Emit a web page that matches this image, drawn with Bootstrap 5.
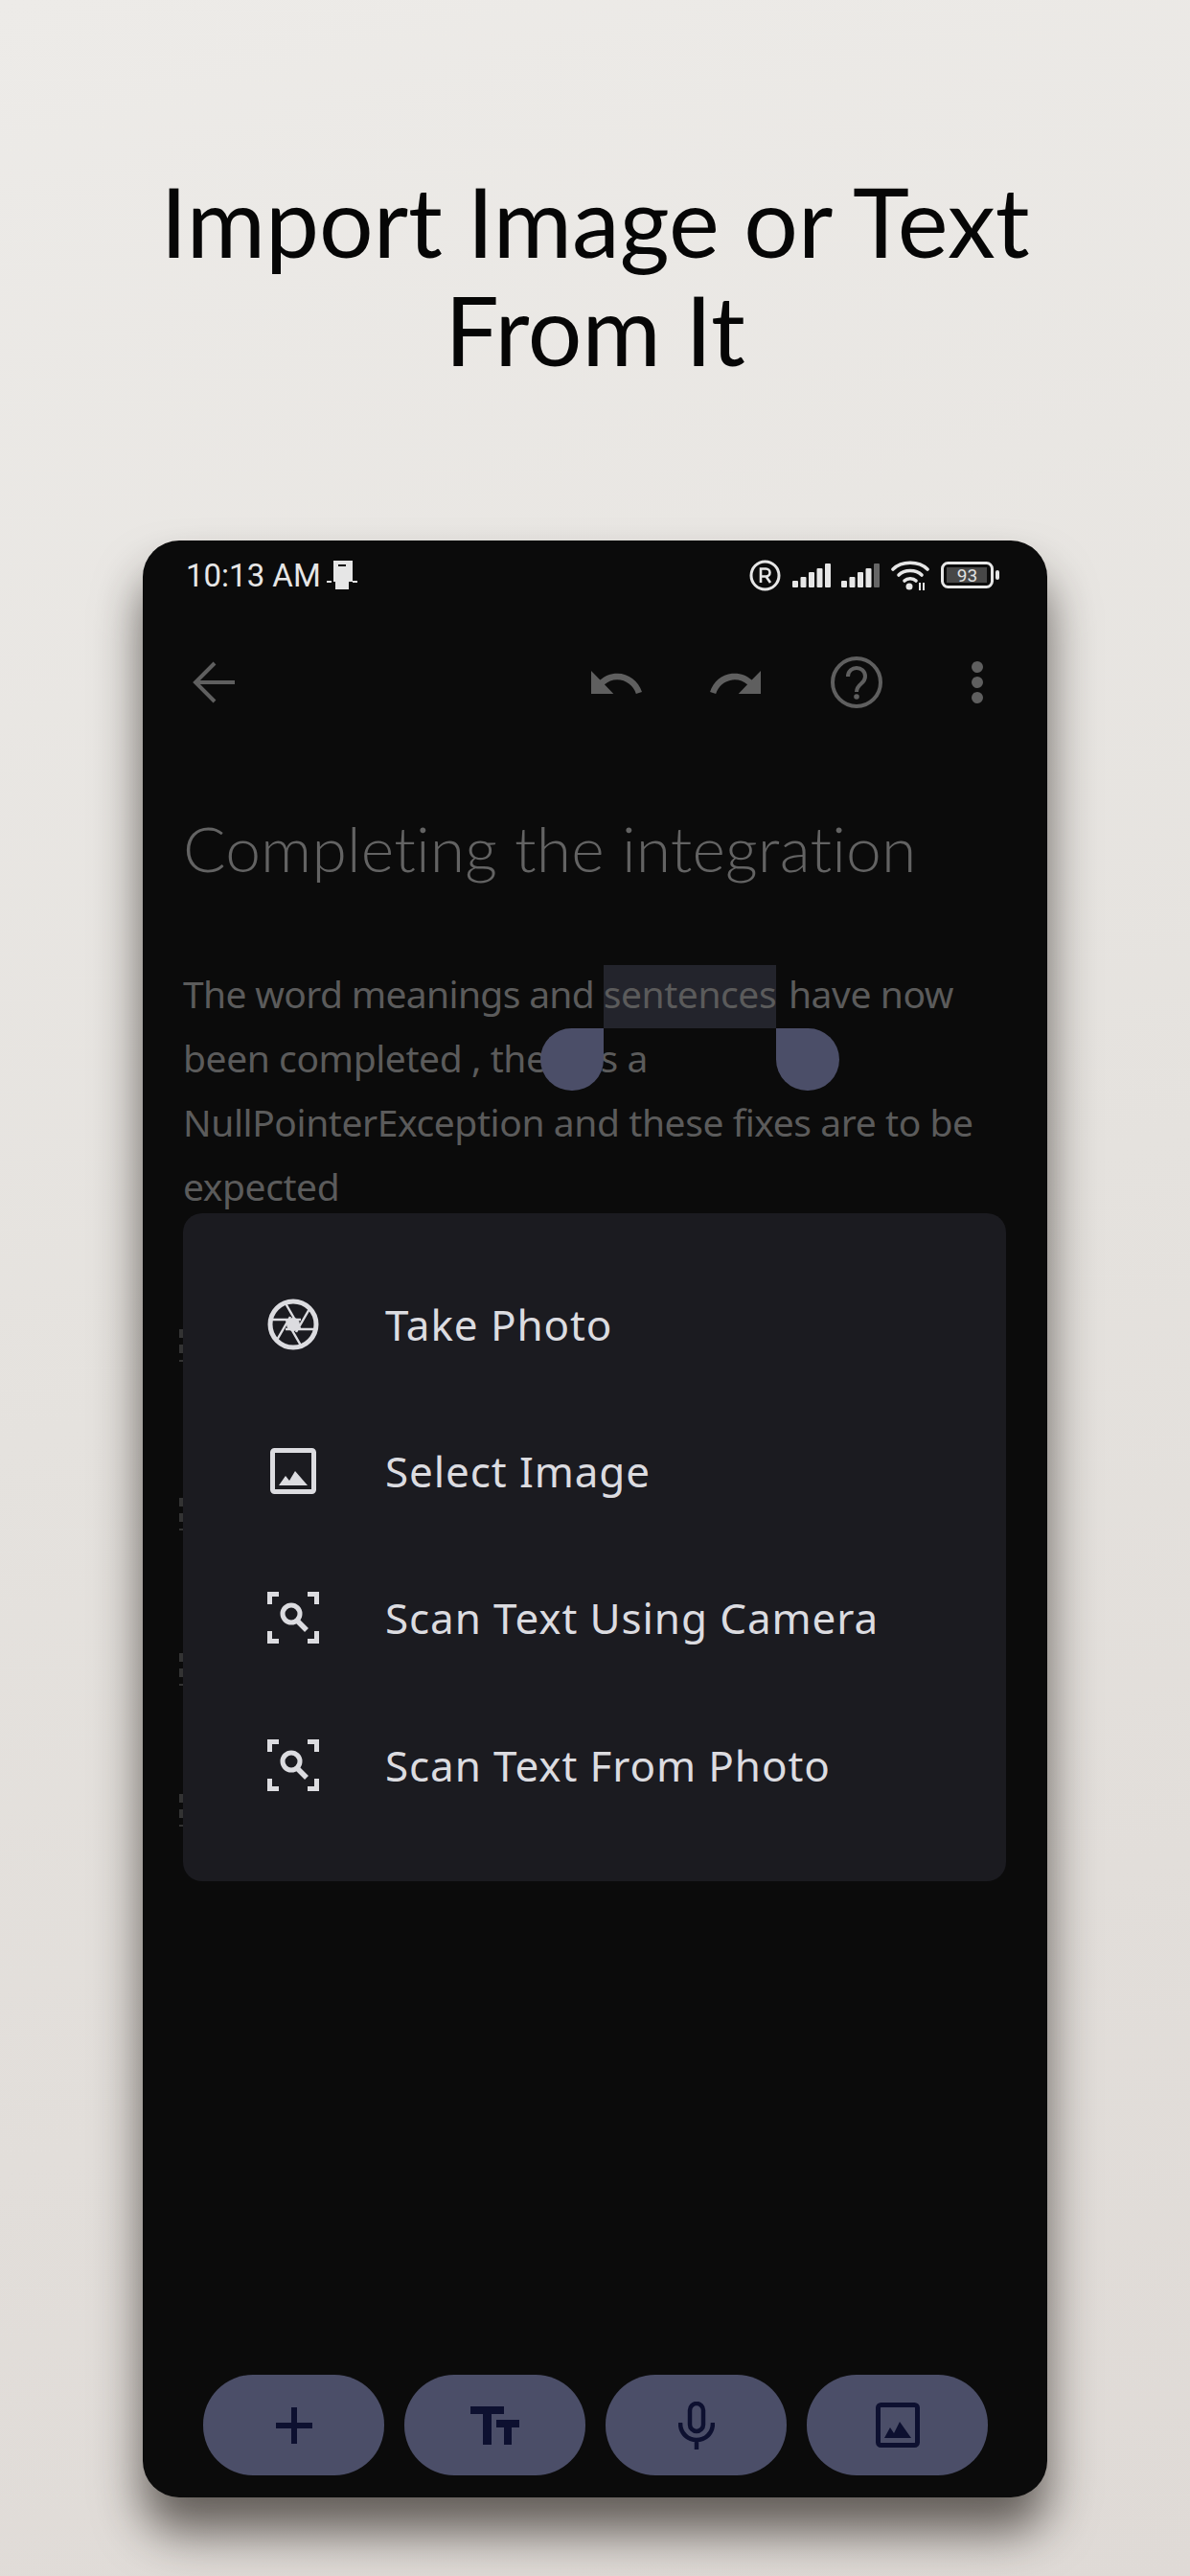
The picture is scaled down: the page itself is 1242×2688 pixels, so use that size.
<!DOCTYPE html>
<html lang="en">
<head>
  <meta charset="UTF-8">
  <title>Import Image or Text</title>
  <link href="https://cdn.jsdelivr.net/npm/bootstrap@5.3.3/dist/css/bootstrap.min.css" rel="stylesheet">
  <style>
    html, body { height: 2688px; overflow: hidden; }
    body {
      background: linear-gradient(165deg, #edebe8 0%, #e5e2de 50%, #dfdad6 100%);
      font-family: "Noto Sans", sans-serif;
    }
    .promo-title {
      font-family: Lato, sans-serif;
      font-weight: 400;
      font-size: 100px;
      line-height: 113px;
      color: #060606;
      padding-top: 174px;
      margin: 0;
      height: 564px;
    }
    .phone {
      width: 944px;
      height: 2042px;
      background: #0b0b0b;
      border-radius: 38px;
      box-shadow: 0 36px 50px rgba(30, 25, 20, .65);
      position: relative;
    }
    .status-bar { height: 72px; padding: 0 49px 0 45px; color: #e6e6e6; }
    .status-time { font: 400 33px Roboto, sans-serif; }
    .status-note { margin-left: 6px; }
    .gap-status { margin-left: 12px; }
    .tool-bar { height: 152px; padding: 0 66px 0 52px; }
    .tool-bar svg { display: block; }
    .gap-undo { margin-left: 71px; }
    .gap-help { margin-left: 73px; }
    .gap-more { margin-left: 92px; }
    .doc-title {
      font-family: Lato, sans-serif;
      font-weight: 300;
      font-size: 66px;
      line-height: 80px;
      letter-spacing: .15px;
      color: #636363;
      margin: 57px 0 0 42px;
    }
    .doc-text {
      font-size: 39px;
      line-height: 67px;
      color: #5b5b5b;
      letter-spacing: -.42px;
      margin: 78px 0 0 42px;
      width: 860px;
      position: relative;
      z-index: 0;
    }
    .lead-words { letter-spacing: -.66px; }
    .sel-word {
      display: inline-block;
      position: relative;
      height: 66px;
      line-height: 66px;
      margin-right: 3px;
    }
    .sel-word::before {
      content: "";
      position: absolute;
      inset: 3px 0 -3px;
      background: #23242c;
      z-index: -1;
    }
    .sel-handle { position: absolute; top: 69px; width: 66px; height: 65px; background: #4b4e68; }
    .sel-left { right: 100%; border-radius: 33px 0 33px 33px; }
    .sel-right { left: 100%; border-radius: 0 33px 33px 33px; }
    .drag-dots {
      position: absolute;
      left: 38px;
      width: 4px;
      height: 34px;
      background: repeating-linear-gradient(#333 0 9px, transparent 9px 16px);
    }
    .insert-menu {
      position: absolute;
      left: 42px;
      top: 702px;
      width: 859px;
      height: 697px;
      background: #1b1b20;
      border-radius: 20px;
      padding-top: 39px;
    }
    .menu-row {
      height: 153.4px;
      padding-left: 88px;
      font-size: 44px;
      letter-spacing: .9px;
      color: #dcdce0;
    }
    .menu-icon { width: 54px; height: 54px; margin-right: 69px; flex: none; }
    .bottom-bar {
      position: absolute;
      left: 63px;
      bottom: 23px;
      gap: 21px;
    }
    .pill-btn {
      width: 189px;
      height: 105px;
      border-radius: 52px;
      background: #4b4e68;
    }
  </style>
</head>
<body>
  <h1 class="promo-title text-center">Import Image or Text<br>From It</h1>

  <div class="phone mx-auto d-flex flex-column">
    <div class="status-bar d-flex align-items-center">
      <span class="status-time">10:13 AM</span>
      <svg class="status-note" width="32" height="30" viewBox="0 0 32 30"><path fill="#e6e6e6" d="M7 0h20v22h-4v8H9v-8H7z"/><path fill="#0b0b0b" d="M12 4h8v2h-8z"/><path fill="#e6e6e6" d="M0 21h5v2H0zM27 21h5v2h-5z"/></svg>
      <div class="ms-auto d-flex align-items-center">
        <svg width="33" height="33" viewBox="0 0 33 33"><circle cx="16.500" cy="16.500" r="14.500" fill="none" stroke="#e6e6e6" stroke-width="3"/><path fill="none" stroke="#e6e6e6" stroke-width="2.600" d="M12 24V9.500h5.500a4 4 0 0 1 0 8H12M17.500 17.500l4.500 6.500"/></svg>
        <svg class="gap-status" width="91" height="26" viewBox="0 0 91 26" fill="#e6e6e6"><rect x="0" y="19" width="6" height="7" rx="1"/><rect x="8.500" y="15" width="6" height="11" rx="1"/><rect x="17" y="10" width="6" height="16" rx="1"/><rect x="25.500" y="6" width="6" height="20" rx="1"/><rect x="34" y="1" width="6" height="25" rx="1"/><rect x="51" y="19" width="6" height="7" rx="1"/><rect x="59.500" y="15" width="6" height="11" rx="1"/><rect x="68" y="10" width="6" height="16" rx="1"/><rect x="76.500" y="6" width="6" height="20" rx="1"/><rect x="85" y="1" width="6" height="25" rx="1" fill="#666"/></svg>
        <svg class="gap-status" width="40" height="32" viewBox="0 0 40 32"><g fill="none" stroke="#e6e6e6" stroke-width="3.600" stroke-linecap="round"><path d="M2 10C11 1 29 1 38 10"/><path d="M8 16C14 10 26 10 32 16"/><path d="M14 22c3-3 9-3 12 0"/></g><circle cx="19" cy="28" r="3.500" fill="#e6e6e6"/><path fill="#e6e6e6" d="M29 24h2v8h-2zM33 24h2v8h-2z"/></svg>
        <svg class="gap-status" width="62" height="28" viewBox="0 0 62 28"><rect x="1.500" y="1.500" width="52" height="25" rx="6" fill="none" stroke="#e6e6e6" stroke-width="3"/><rect x="6" y="6" width="42" height="16" fill="#474747"/><text x="27.500" y="20.500" text-anchor="middle" font-family="Roboto, sans-serif" font-size="19" fill="#e0e0e0">93</text><rect x="57" y="9" width="4" height="10" rx="2" fill="#e6e6e6"/></svg>
      </div>
    </div>

    <div class="tool-bar d-flex align-items-center">
      <svg width="44" height="44" viewBox="0 0 44 44" fill="none" stroke="#5f5f5f" stroke-width="4"><path d="M44 22H4M23 2 3 22l20 20"/></svg>
      <svg class="ms-auto" width="53" height="24" viewBox="2 7 20.470 9" preserveAspectRatio="none"><path fill="#5f5f5f" d="M12.500 8c-2.650 0-5.050.99-6.900 2.600L2 7v9h9l-3.620-3.620c1.390-1.160 3.160-1.880 5.120-1.880 3.540 0 6.550 2.310 7.600 5.500l2.370-.78C21.080 11.030 17.150 8 12.500 8z"/></svg>
      <svg class="gap-undo" width="53" height="24" viewBox="1.530 7 20.470 9" preserveAspectRatio="none"><path fill="#5f5f5f" d="M18.400 10.600C16.550 8.990 14.150 8 11.500 8c-4.650 0-8.580 3.030-9.960 7.220L3.900 16c1.050-3.190 4.050-5.500 7.600-5.500 1.950 0 3.730.72 5.120 1.880L13 16h9V7l-3.600 3.600z"/></svg>
      <svg class="gap-help" width="54" height="54" viewBox="0 0 54 54" fill="none"><circle cx="27" cy="27" r="25" stroke="#5f5f5f" stroke-width="4"/><path stroke="#5f5f5f" stroke-width="4" d="M18 21c0-12 18-12 18 0 0 8-9 7-9 16"/><circle cx="27" cy="42" r="2.800" fill="#5f5f5f"/></svg>
      <svg class="gap-more" width="14" height="44" viewBox="0 0 14 44" fill="#5f5f5f"><circle cx="7" cy="6" r="6"/><circle cx="7" cy="22" r="6"/><circle cx="7" cy="38" r="6"/></svg>
    </div>

    <div class="doc-title">Completing the integration</div>
    <div class="doc-text"><span class="lead-words">The word meanings and </span><span class="sel-word">sentences<span class="sel-handle sel-left"></span><span class="sel-handle sel-right"></span></span> have now been completed , there is a<br>NullPointerException and these fixes are to be expected</div>

    <div class="drag-dots" style="top:823px"></div>
    <div class="drag-dots" style="top:999px"></div>
    <div class="drag-dots" style="top:1161px"></div>
    <div class="drag-dots" style="top:1308px"></div>

    <div class="insert-menu">
      <div class="menu-row d-flex align-items-center">
        <svg class="menu-icon" viewBox="0 0 54 54" fill="none" stroke="#dcdce0"><circle cx="27" cy="27" r="24" stroke-width="5"/><path stroke-width="2.500" d="M19 5l15 26M5 22h30M9 45l15-26M35 49 20 23M49 32H19M45 9 30 35"/><circle cx="27" cy="27" r="7" fill="#dcdce0" stroke="none"/></svg>
        <span>Take Photo</span>
      </div>
      <div class="menu-row d-flex align-items-center">
        <svg class="menu-icon" viewBox="0 0 54 54"><rect x="5.500" y="5.500" width="43" height="43" rx="2" fill="none" stroke="#dcdce0" stroke-width="5"/><path fill="#dcdce0" d="M12 42l7-10 4 5 6-10 13 15z"/></svg>
        <span>Select Image</span>
      </div>
      <div class="menu-row d-flex align-items-center">
        <svg class="menu-icon" viewBox="0 0 54 54" fill="none" stroke="#dcdce0" stroke-width="5"><path d="M12 2.500H2.500V13M42 2.500h9.500V13M2.500 41v10.500H12M51.500 41v10.500H42"/><circle cx="25" cy="23" r="9"/><path stroke-width="5.500" d="M31 30l10 10"/></svg>
        <span>Scan Text Using Camera</span>
      </div>
      <div class="menu-row d-flex align-items-center">
        <svg class="menu-icon" viewBox="0 0 54 54" fill="none" stroke="#dcdce0" stroke-width="5"><path d="M12 2.500H2.500V13M42 2.500h9.500V13M2.500 41v10.500H12M51.500 41v10.500H42"/><circle cx="25" cy="23" r="9"/><path stroke-width="5.500" d="M31 30l10 10"/></svg>
        <span>Scan Text From Photo</span>
      </div>
    </div>

    <div class="bottom-bar d-flex">
      <div class="pill-btn d-flex align-items-center justify-content-center">
        <svg width="38" height="38" viewBox="0 0 38 38"><path fill="#0d1030" d="M16 0h6v16h16v6H22v16h-6V22H0v-6h16z"/></svg>
      </div>
      <div class="pill-btn d-flex align-items-center justify-content-center">
        <svg width="52" height="40" viewBox="0 0 52 40"><path fill="#0d1030" d="M0 0h35v8H22v32h-9V8H0zM27 14h24v8h-8v18h-8V22h-8z"/></svg>
      </div>
      <div class="pill-btn d-flex align-items-center justify-content-center">
        <svg width="38" height="50" viewBox="0 0 38 50" fill="none" stroke="#0d1030" stroke-width="4.500"><rect x="12" y="2" width="14" height="29" rx="7"/><path d="M2 22c0 24 34 24 34 0M19 38v12"/></svg>
      </div>
      <div class="pill-btn d-flex align-items-center justify-content-center">
        <svg width="46" height="47" viewBox="0 0 46 47"><rect x="2.500" y="2.500" width="41" height="42" rx="3" fill="none" stroke="#0d1030" stroke-width="5"/><path fill="#0d1030" d="M9 37l6-11 4 6 6-12 12 17z"/></svg>
      </div>
    </div>
  </div>
</body>
</html>
